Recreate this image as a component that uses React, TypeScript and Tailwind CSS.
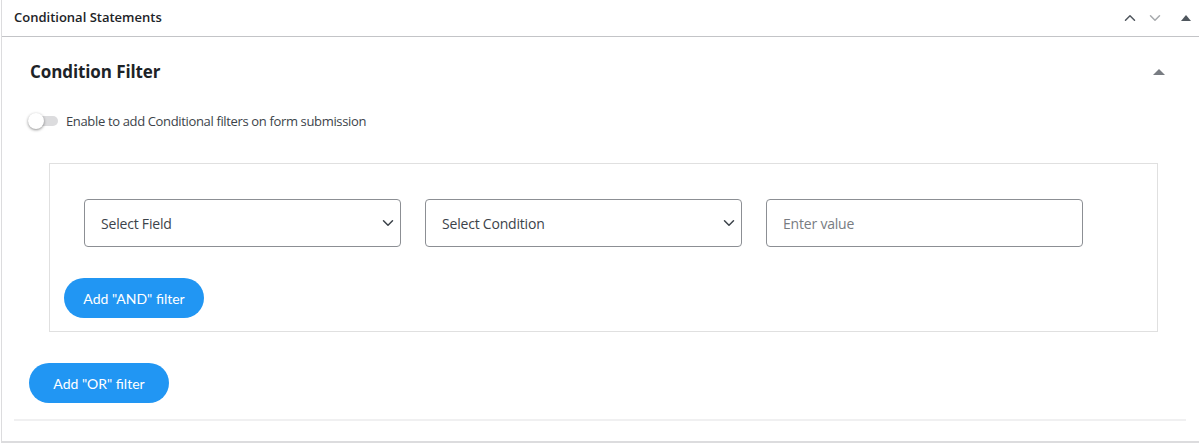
import { ChevronDown, ChevronUp } from 'lucide-react'

const font = { fontFamily: '"Open Sans", "Noto Sans", sans-serif' }

function SelectBox({ label }: { label: string }) {
  return (
    <div className="flex h-12 w-[317px] items-center justify-between rounded border border-[#8c8f94] bg-white pl-4 pr-[3px] text-[14px] text-[#3c434a]">
      <span className="tracking-[-0.2px]">{label}</span>
      <ChevronDown size={18} strokeWidth={2} className="text-[#3c434a]" />
    </div>
  )
}

function PillButton({ children }: { children: string }) {
  return (
    <button
      className="flex h-10 w-[140px] items-center justify-center rounded-full bg-[#2196f3] text-[14px] text-white"
      style={{ fontFamily: 'Lato, "Open Sans", sans-serif' }}
    >
      {children}
    </button>
  )
}

export default function App() {
  return (
    <div className="h-[445px] w-[1199px] bg-white pl-px" style={font}>
      <div className="border-b-2 border-l border-[#dcdcde]">
        {/* header */}
        <div className="flex h-[37px] items-center justify-between border-b border-[#c3c4c7] pl-[12px] pr-2">
          <span className="text-[13px] font-semibold text-[#1d2327]">Conditional Statements</span>
          <div className="flex items-center gap-[7px]">
            <ChevronUp size={18} strokeWidth={2} className="text-[#50575e]" />
            <ChevronDown size={18} strokeWidth={2} className="text-[#a7aaad]" />
            <span className="ml-[10px] h-0 w-0 border-x-[5px] border-b-[6px] border-x-transparent border-b-[#50575e]" />
          </div>
        </div>

        {/* body */}
        <div className="pl-[12px] pr-[13px]">
          <div className="border-b-2 border-[#f0f0f1] pb-[16px]">
            <div className="flex items-center justify-between pl-[16px] pr-[21px] pt-[22px]">
              <h2 className="text-[17px] font-bold text-[#1d2327] tracking-[-0.1px]">Condition Filter</h2>
              <span className="h-0 w-0 border-x-[6px] border-b-[6px] border-x-transparent border-b-[#787c82]" />
            </div>

            <div className="mt-[27px] flex items-center gap-2 pl-[14px]">
              <div className="relative h-[10px] w-[30px] rounded-full bg-[#dcdcde]">
                <span className="absolute -top-[3px] left-0 h-4 w-4 rounded-full bg-white shadow-[0_1px_3px_rgba(0,0,0,0.45)]" />
              </div>
              <span className="text-[13px] text-[#3c434a] tracking-[-0.35px]">Enable to add Conditional filters on form submission</span>
            </div>

            <div className="ml-[35px] mr-[28px] mt-[32px] border border-[#e0e0e0] pb-[13px] pl-[14px] pt-[35px]">
              <div className="flex gap-6 pl-[20px]">
                <SelectBox label="Select Field" />
                <SelectBox label="Select Condition" />
                <div className="flex h-12 w-[317px] items-center rounded border border-[#8c8f94] bg-white pl-4 text-[14px] text-[#787c82] tracking-[-0.2px]">
                  Enter value
                </div>
              </div>
              <div className="mt-[31px]">
                <PillButton>Add "AND" filter</PillButton>
              </div>
            </div>

            <div className="mt-[31px] pl-[15px]">
              <PillButton>Add "OR" filter</PillButton>
            </div>
          </div>
          <div className="h-[20px]" />
        </div>
      </div>
    </div>
  )
}
